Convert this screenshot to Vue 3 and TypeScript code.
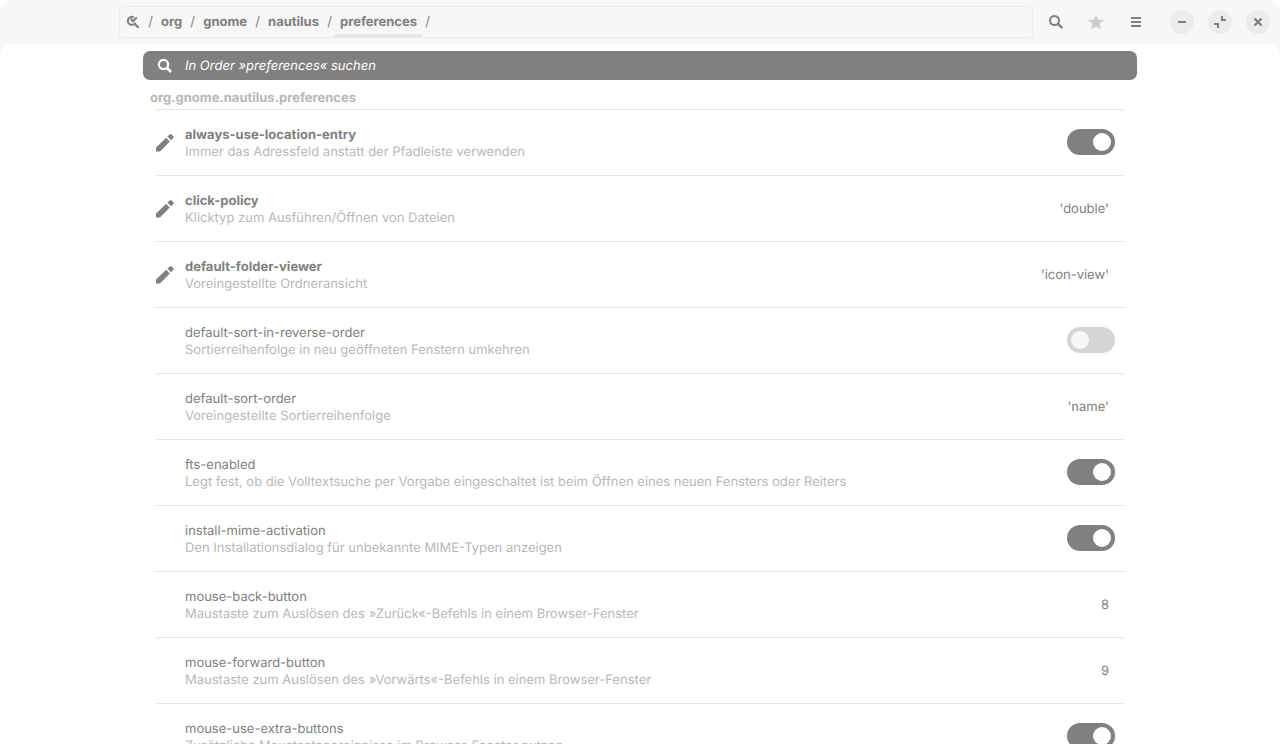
<script setup lang="ts">
import { ref } from 'vue'

interface Setting {
  key: string
  summary: string
  modified?: boolean
  value: string | boolean
}

const path = ['org', 'gnome', 'nautilus', 'preferences']

const settings = ref<Setting[]>([
  { key: 'always-use-location-entry', summary: 'Immer das Adressfeld anstatt der Pfadleiste verwenden', modified: true, value: true },
  { key: 'click-policy', summary: 'Klicktyp zum Ausführen/Öffnen von Dateien', modified: true, value: "'double'" },
  { key: 'default-folder-viewer', summary: 'Voreingestellte Ordneransicht', modified: true, value: "'icon-view'" },
  { key: 'default-sort-in-reverse-order', summary: 'Sortierreihenfolge in neu geöffneten Fenstern umkehren', value: false },
  { key: 'default-sort-order', summary: 'Voreingestellte Sortierreihenfolge', value: "'name'" },
  { key: 'fts-enabled', summary: 'Legt fest, ob die Volltextsuche per Vorgabe eingeschaltet ist beim Öffnen eines neuen Fensters oder Reiters', value: true },
  { key: 'install-mime-activation', summary: 'Den Installationsdialog für unbekannte MIME-Typen anzeigen', value: true },
  { key: 'mouse-back-button', summary: 'Maustaste zum Auslösen des »Zurück«-Befehls in einem Browser-Fenster', value: '8' },
  { key: 'mouse-forward-button', summary: 'Maustaste zum Auslösen des »Vorwärts«-Befehls in einem Browser-Fenster', value: '9' },
  { key: 'mouse-use-extra-buttons', summary: 'Zusätzliche Maustastenereignisse im Browser-Fenster nutzen', value: true },
])
</script>

<template>
  <div class="window">
    <header class="header">
      <nav class="pathbar">
        <button class="root" aria-label="/">
          <svg width="14" height="14" viewBox="0 0 14 14">
            <path d="M7.8 2.4A4 4 0 1 0 9.4 7.6" fill="none" stroke="currentColor" stroke-width="2" />
            <path d="M8.2 8.6L12.6 12.8" stroke="currentColor" stroke-width="2.2" />
            <path d="M4.6 3.6L6.8 6.2L10.8 2.4" fill="none" stroke="currentColor" stroke-width="2" />
          </svg>
        </button>
        <span class="slash">/</span>
        <template v-for="(part, i) in path" :key="part">
          <button class="part" :class="{ current: i === path.length - 1 }">{{ part }}</button>
          <span class="slash">/</span>
        </template>
      </nav>
      <div class="tools">
        <button class="tool" aria-label="Suchen">
          <svg width="16" height="16" viewBox="0 0 16 16">
            <circle cx="6.5" cy="6.5" r="4.5" fill="none" stroke="currentColor" stroke-width="2" />
            <path d="M9.7 9.7L14.4 14.2" stroke="currentColor" stroke-width="2.4" />
          </svg>
        </button>
        <button class="tool faded" aria-label="Lesezeichen">
          <svg width="16" height="16" viewBox="0 0 16 16">
            <path d="M8 0L10.1 5.8L16 6L11.4 9.7L13 15.6L8 12.2L3 15.6L4.6 9.7L0 6L5.9 5.8Z" fill="currentColor" />
          </svg>
        </button>
        <button class="tool" aria-label="Menü">
          <svg width="16" height="16" viewBox="0 0 16 16">
            <path d="M3 3h10v2H3zM3 7h10v2H3zM3 11h10v2H3z" fill="currentColor" />
          </svg>
        </button>
      </div>
      <div class="controls">
        <button class="control" aria-label="Minimieren">
          <svg width="16" height="16" viewBox="0 0 16 16"><path d="M4 7h8v2H4z" fill="currentColor" /></svg>
        </button>
        <button class="control" aria-label="Wiederherstellen">
          <svg width="16" height="16" viewBox="0 0 16 16">
            <path d="M9 2h2v3h3v2H9zM2 9h5v5H5v-3H2z" fill="currentColor" />
          </svg>
        </button>
        <button class="control" aria-label="Schließen">
          <svg width="16" height="16" viewBox="0 0 16 16">
            <path d="M4.5 4.5L11.5 11.5M11.5 4.5L4.5 11.5" stroke="currentColor" stroke-width="2.2" />
          </svg>
        </button>
      </div>
    </header>

    <main class="content">
      <div class="column">
        <button class="search-row">
          <svg width="16" height="16" viewBox="0 0 16 16">
            <circle cx="6.5" cy="6.5" r="4.6" fill="none" stroke="currentColor" stroke-width="2.2" />
            <path d="M9.6 9.6L14 14" stroke="currentColor" stroke-width="2.8" />
          </svg>
          <span class="prompt">In Order »preferences« suchen</span>
        </button>
        <h1 class="schema">org.gnome.nautilus.preferences</h1>
        <ul class="list">
          <li v-for="s in settings" :key="s.key" class="row" :class="{ modified: s.modified }">
            <span class="mark">
              <svg v-if="s.modified" width="18" height="20" viewBox="0 0 18 20">
                <path d="M0 14.5L10.2 4.8L13.8 8.4L4 18.6H0zM11.4 3.6L14 1.2Q14.7 .6 15.4 1.2L17.5 3.4Q18.1 4.1 17.5 4.8L15 7.2z" fill="currentColor" />
              </svg>
            </span>
            <label class="text" :for="typeof s.value === 'boolean' ? s.key : undefined">
              <span class="key">{{ s.key }}</span>
              <span class="summary">{{ s.summary }}</span>
            </label>
            <input v-if="typeof s.value === 'boolean'" :id="s.key" v-model="s.value" class="switch" type="checkbox" role="switch" />
            <span v-else class="value">{{ s.value }}</span>
          </li>
        </ul>
      </div>
    </main>
  </div>
</template>

<style>
body {
  margin: 0;
  background: #fff;
}
</style>

<style scoped>
.window {
  display: flex;
  flex-direction: column;
  height: 100vh;
  overflow: hidden;
  border-radius: 12px 12px 0 0;
  background: #f7f7f7;
  color: #808080;
  font: 13px/17px Inter, "Noto Sans", sans-serif;
  text-rendering: geometricPrecision;
}
button {
  margin: 0;
  padding: 0;
  border: 0;
  background: none;
  color: inherit;
  font: inherit;
  text-rendering: inherit;
}
svg {
  display: block;
}
.header {
  flex: none;
  display: flex;
  align-items: center;
  box-sizing: border-box;
  height: 44px;
  padding: 0 10px 0 119px;
}
.pathbar {
  flex: 1;
  display: flex;
  box-sizing: border-box;
  height: 32px;
  border: 1px solid #ebebeb;
  border-radius: 3px;
}
.root {
  display: flex;
  align-items: center;
  padding: 0 5px 0 6px;
}
.part {
  padding: 0 5px;
  font-weight: 700;
  border-bottom: 3px solid transparent;
  border-top: 3px solid transparent;
}
.part.current {
  background: linear-gradient(#e6e6e6, #e6e6e6) bottom / 100% 3px no-repeat border-box;
}
.slash {
  width: 11px;
  line-height: 30px;
  text-align: center;
}
.tools {
  display: flex;
  gap: 8px;
  margin-left: 7px;
}
.tool {
  display: flex;
  align-items: center;
  justify-content: center;
  width: 32px;
  height: 32px;
}
.faded {
  color: #ccc;
}
.controls {
  display: flex;
  gap: 14px;
  margin-left: 18px;
}
.control {
  display: flex;
  align-items: center;
  justify-content: center;
  width: 24px;
  height: 24px;
  border-radius: 50%;
  background: #ececec;
}
.content {
  flex: 1;
  min-height: 0;
  overflow-y: auto;
  scrollbar-width: none;
  border-radius: 12px 12px 0 0;
  background: #fff;
}
.column {
  max-width: 994px;
  margin: 0 auto;
  padding-top: 7px;
}
.search-row {
  display: flex;
  align-items: center;
  gap: 12px;
  width: 100%;
  height: 29px;
  padding: 0 14px;
  border-radius: 7px;
  background: #808080;
  color: #fff;
  font-style: italic;
}
.prompt {
  padding-top: 2px;
}
.schema {
  margin: 0;
  padding: 10px 7px 2px;
  color: #b8b8b8;
  font: inherit;
  font-weight: 700;
}
.list {
  margin: 0 13px;
  padding: 0;
  list-style: none;
}
.row {
  display: flex;
  align-items: flex-start;
  padding: 15px 9px 14px 0;
  border-top: 1px solid #e6e6e6;
}
.mark {
  flex: none;
  width: 29px;
  padding-top: 8px;
}
.text {
  flex: 1;
  padding-top: 2px;
}
.key,
.summary {
  display: block;
}
.summary {
  color: #b8b8b8;
}
.modified .key {
  font-weight: 700;
}
.value {
  padding: 10px 6px 0 0;
}
.switch {
  appearance: none;
  flex: none;
  display: flex;
  box-sizing: border-box;
  width: 48px;
  height: 26px;
  margin: 4px 0 0;
  padding: 4px;
  border-radius: 13px;
  background: #d5d5d5;
}
.switch::before {
  content: "";
  width: 18px;
  height: 18px;
  border-radius: 50%;
  background: #f7f7f7;
}
.switch:checked {
  justify-content: flex-end;
  background: #808080;
}
.switch:checked::before {
  background: #fff;
}
</style>
